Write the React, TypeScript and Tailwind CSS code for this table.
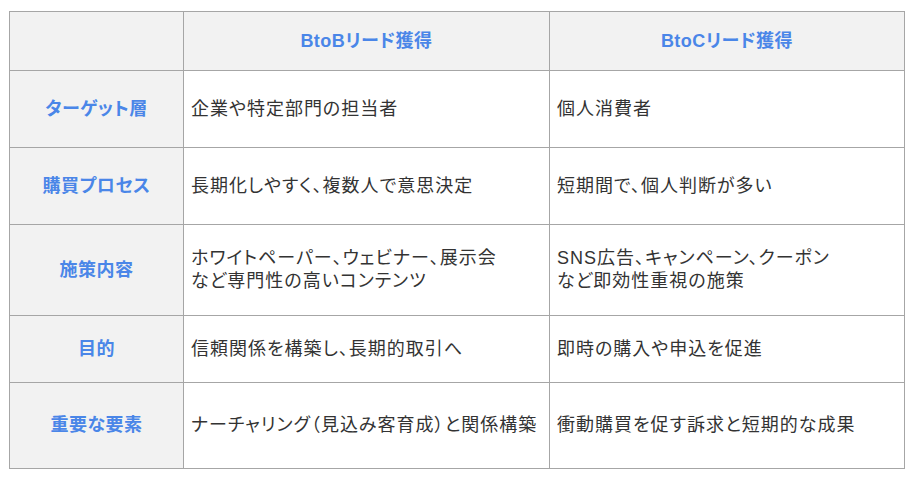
const rows: { label: string; b2b: string[]; b2c: string[]; h: string }[] = [
  { label: "ターゲット層", b2b: ["企業や特定部門の担当者"], b2c: ["個人消費者"], h: "h-[77px]" },
  { label: "購買プロセス", b2b: ["長期化しやすく、複数人で意思決定"], b2c: ["短期間で、個人判断が多い"], h: "h-[77px]" },
  {
    label: "施策内容",
    b2b: ["ホワイトペーパー、ウェビナー、展示会", "など専門性の高いコンテンツ"],
    b2c: ["SNS広告、キャンペーン、クーポン", "など即効性重視の施策"],
    h: "h-[91px]",
  },
  { label: "目的", b2b: ["信頼関係を構築し、長期的取引へ"], b2c: ["即時の購入や申込を促進"], h: "h-[67px]" },
  { label: "重要な要素", b2b: ["ナーチャリング（見込み客育成）と関係構築"], b2c: ["衝動購買を促す訴求と短期的な成果"], h: "h-[86px]" },
];

export default function App() {
  return (
    <div
      className="w-[911px] h-[477px] bg-white pl-[9px] pt-[11px] [font-feature-settings:'palt']"
      style={{ fontFamily: '"Liberation Sans", "Noto Sans CJK JP", sans-serif' }}
    >
      <table className="border-collapse w-[895px] table-fixed">
        <colgroup>
          <col className="w-[174px]" />
          <col className="w-[366px]" />
          <col className="w-[355px]" />
        </colgroup>
        <thead>
          <tr className="h-[59px] bg-[#f2f2f2]">
            <th className="border border-[#a6a6a6]"></th>
            <th className="border border-[#a6a6a6] text-[18px] tracking-[0.5px] font-bold text-[#4a86e8] text-center">BtoBリード獲得</th>
            <th className="border border-[#a6a6a6] text-[18px] tracking-[0.5px] font-bold text-[#4a86e8] text-center">BtoCリード獲得</th>
          </tr>
        </thead>
        <tbody>
          {rows.map((r) => (
            <tr key={r.label} className={r.h}>
              <td className="border border-[#a6a6a6] bg-[#f2f2f2] text-center text-[18px] tracking-[0.5px] font-bold text-[#4a86e8]">
                {r.label}
              </td>
              <td className="border border-[#a6a6a6] px-[7px] text-[18px] tracking-[1px] leading-[23px] text-[#333333] whitespace-nowrap">
                {r.b2b.map((l) => (
                  <div key={l}>{l}</div>
                ))}
              </td>
              <td className="border border-[#a6a6a6] px-[7px] text-[18px] tracking-[1px] leading-[23px] text-[#333333] whitespace-nowrap">
                {r.b2c.map((l) => (
                  <div key={l}>{l}</div>
                ))}
              </td>
            </tr>
          ))}
        </tbody>
      </table>
    </div>
  );
}
